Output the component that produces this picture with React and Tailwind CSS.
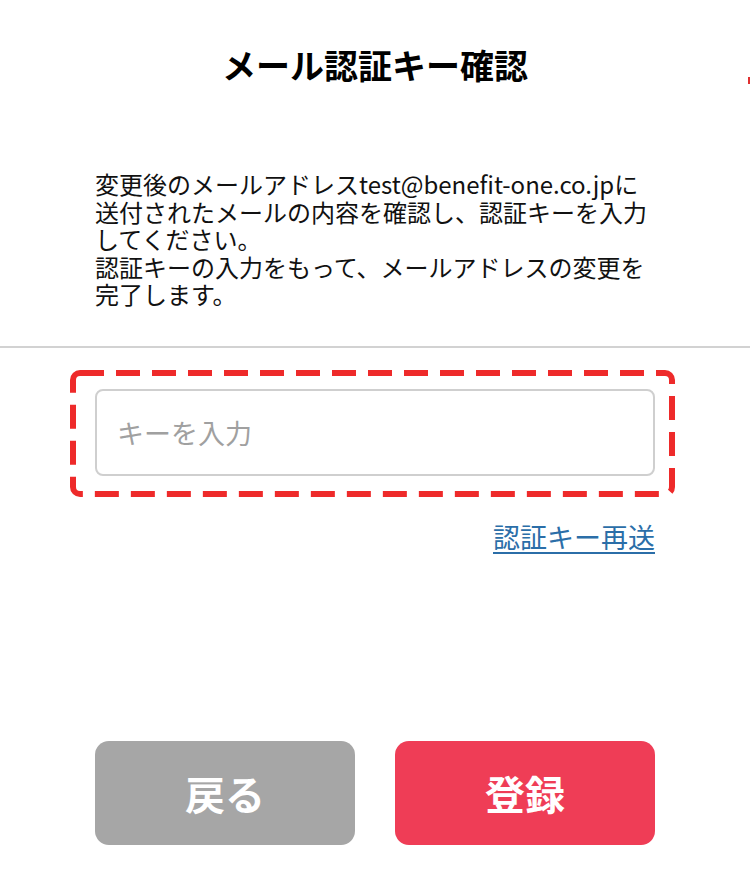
import React from 'react'

const font = { fontFamily: '"Noto Sans CJK JP", "Noto Sans", sans-serif' }

const DashedFrame = () => (
  <svg
    className="pointer-events-none absolute -left-[25px] -top-[19px]"
    width="605"
    height="127"
    viewBox="0 0 605 127"
  >
    <rect
      x="3"
      y="3"
      width="599"
      height="121"
      rx="7"
      fill="none"
      stroke="#ee2a2a"
      strokeWidth="6"
      strokeDasharray="24 12"
    />
  </svg>
)

const App = () => {
  return (
    <div className="relative min-h-[890px] w-[750px] overflow-hidden bg-white text-[#111]" style={font}>
      <div className="absolute right-0 top-[77px] h-[7px] w-[2px] bg-[#e03030]" />

      <h1 className="pt-[40px] text-center text-[34px] font-bold leading-[50px] text-black">
        メール認証キー確認
      </h1>

      <p className="mx-auto mt-[80px] w-[560px] text-[24px] leading-[27.5px]">
        変更後のメールアドレスtest@benefit-one.co.jpに
        <br />
        送付されたメールの内容を確認し、認証キーを入力
        <br />
        してください。
        <br />
        認証キーの入力をもって、メールアドレスの変更を
        <br />
        完了します。
      </p>

      <div className="mt-[38px] h-[2px] w-full bg-[#d2d2d2]" />

      <div className="mx-auto mt-[41px] w-[560px]">
        <div className="relative">
          <input
            type="text"
            placeholder="キーを入力"
            className="h-[87px] w-full rounded-[8px] border-2 border-[#cfcfcf] bg-white px-[20px] text-[27px] text-[#333] outline-none placeholder:text-[#a0a0a0]"
            style={font}
          />
          <DashedFrame />
        </div>

        <div className="mt-[42px] flex justify-end">
          <a href="#" className="text-[27px] leading-[38px] text-[#2b6ea8] underline underline-offset-[4px]">
            認証キー再送
          </a>
        </div>

        <div className="mt-[185px] flex gap-[40px]">
          <button className="flex h-[104px] w-[260px] items-center justify-center rounded-[14px] bg-[#a6a6a6] text-[40px] font-bold text-white">
            戻る
          </button>
          <button className="flex h-[104px] w-[260px] items-center justify-center rounded-[14px] bg-[#ef3d56] text-[40px] font-bold text-white">
            登録
          </button>
        </div>
      </div>
    </div>
  )
}

export default App
